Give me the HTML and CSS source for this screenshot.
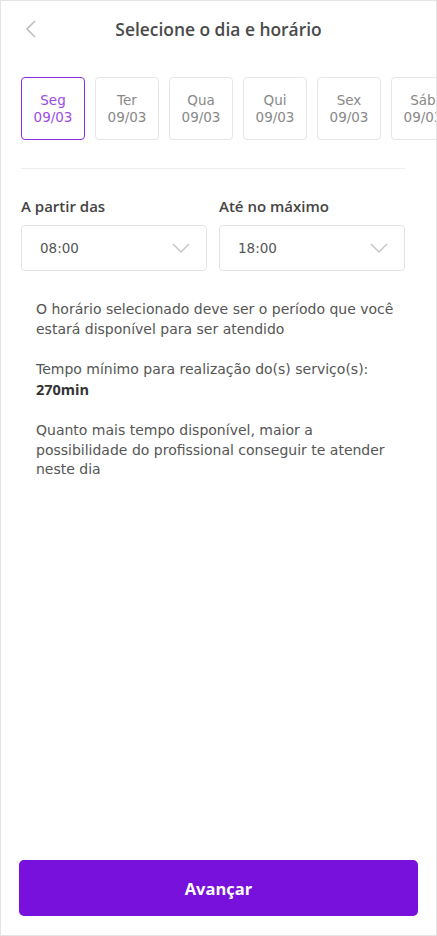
FILE: index.html
```html
<!DOCTYPE html>
<html lang="pt-BR">
<head>
    <meta charset="UTF-8">
    <meta name="viewport" content="width=device-width, initial-scale=1.0">
    <title>Selecione o dia e horário</title>
    <link rel="stylesheet" href="styles.css">
</head>
<body>
    <div class="screen">
        <header class="header">
            <button class="back" aria-label="Voltar">
                <svg width="12" height="18" viewBox="0 0 12 18"><path d="M10 1 L2 9 L10 17" fill="none" stroke="#bdbdbd" stroke-width="1.6"/></svg>
            </button>
            <h1>Selecione o dia e horário</h1>
        </header>

        <div class="days">
            <div class="day active"><span>Seg</span><span>09/03</span></div>
            <div class="day"><span>Ter</span><span>09/03</span></div>
            <div class="day"><span>Qua</span><span>09/03</span></div>
            <div class="day"><span>Qui</span><span>09/03</span></div>
            <div class="day"><span>Sex</span><span>09/03</span></div>
            <div class="day"><span>Sáb</span><span>09/03</span></div>
            <div class="day"><span>Dom</span><span>09/03</span></div>
        </div>

        <hr class="divider">

        <div class="times">
            <div class="field">
                <label>A partir das</label>
                <div class="select">
                    <span>08:00</span>
                    <svg width="18" height="10" viewBox="0 0 18 10"><path d="M1 1 L9 9 L17 1" fill="none" stroke="#c4c4c4" stroke-width="1.4"/></svg>
                </div>
            </div>
            <div class="field">
                <label>Até no máximo</label>
                <div class="select">
                    <span>18:00</span>
                    <svg width="18" height="10" viewBox="0 0 18 10"><path d="M1 1 L9 9 L17 1" fill="none" stroke="#c4c4c4" stroke-width="1.4"/></svg>
                </div>
            </div>
        </div>

        <div class="info">
            <p>O horário selecionado deve ser o período que você estará disponível para ser atendido</p>
            <p>Tempo mínimo para realização do(s) serviço(s): <b>270min</b></p>
            <p>Quanto mais tempo disponível, maior a possibilidade do profissional conseguir te atender neste dia</p>
        </div>

        <div class="footer">
            <button class="next">Avançar</button>
        </div>
    </div>
</body>
</html>
```

FILE: styles.css
```css
body {
    margin: 0;
    font-family: "DejaVu Sans", "Open Sans", sans-serif;
    background: #fff;
    color: #444;
}
.screen {
    width: 437px;
    height: 936px;
    box-sizing: border-box;
    border: 1px solid #e4e4e4;
    display: flex;
    flex-direction: column;
    overflow: hidden;
}
.header {
    display: flex;
    align-items: center;
    justify-content: center;
    position: relative;
    height: 56px;
}
.header h1 {
    margin: 0;
    font-family: "Open Sans", sans-serif;
    font-size: 17.4px;
    font-weight: 600;
    color: #4a4a4a;
}
.back {
    position: absolute;
    left: 22px;
    top: 19px;
    background: none;
    border: none;
    padding: 0;
    width: 16px;
    height: 20px;
}
.days {
    display: flex;
    gap: 10px;
    padding: 20px 0 0 20px;
}
.day {
    flex: 0 0 64px;
    height: 63px;
    box-sizing: border-box;
    border: 1px solid #e6e6e6;
    border-radius: 4px;
    display: flex;
    flex-direction: column;
    align-items: center;
    justify-content: center;
    font-size: 13.5px;
    line-height: 17px;
    color: #888;
}
.day.active {
    border: 1.5px solid #8a2be2;
    color: #9c4ce6;
}
.divider {
    border: none;
    border-top: 1px solid #eeeeee;
    margin: 28px 31px 0 20px;
}
.times {
    display: flex;
    gap: 12px;
    padding: 27px 31px 0 20px;
}
.field {
    flex: 1;
}
.field label {
    display: block;
    font-family: "Open Sans", sans-serif;
    font-size: 15px;
    font-weight: 600;
    color: #444;
    margin-bottom: 9px;
}
.select {
    height: 46px;
    box-sizing: border-box;
    border: 1px solid #e4e4e4;
    border-radius: 4px;
    display: flex;
    align-items: center;
    justify-content: space-between;
    padding: 0 16px 0 18px;
    font-size: 13.5px;
    color: #555;
}
.info {
    padding: 29px 38px 0 35px;
    font-size: 14px;
    line-height: 19.5px;
    color: #555;
}
.info p {
    margin: 0 0 21px;
}
.info b {
    font-family: "Open Sans", sans-serif;
    font-size: 14.5px;
    font-weight: 700;
    color: #333;
}
.footer {
    margin-top: auto;
    padding: 0 18px 19px 18px;
}
.next {
    width: 100%;
    height: 56px;
    border: none;
    border-radius: 5px;
    background: #7811dc;
    color: #fff;
    font-family: "Open Sans", sans-serif;
    font-size: 16.5px;
    font-weight: 700;
}
```
